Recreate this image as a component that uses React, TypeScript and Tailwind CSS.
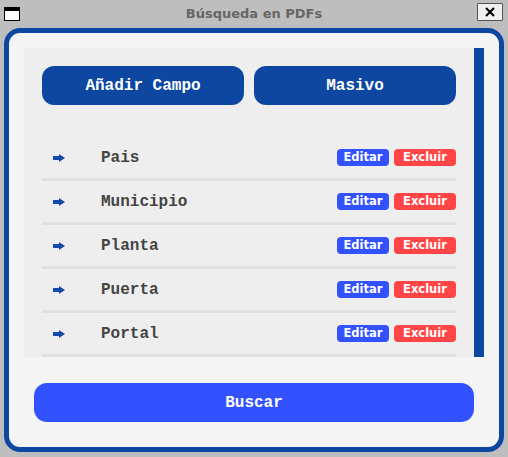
const fields = ["Pais", "Municipio", "Planta", "Puerta", "Portal"];

const Arrow = () => (
  <svg width="12" height="8" viewBox="0 0 12 8" className="shrink-0">
    <rect x="0" y="2" width="7" height="4" fill="#1548a8" />
    <polygon points="6,0 12,4 6,8" fill="#1548a8" />
  </svg>
);

const App: React.FC = () => {
  return (
    <div className="w-[508px] h-[457px] bg-[#bebebe] flex flex-col overflow-hidden">
      {/* title bar */}
      <div className="h-[28px] shrink-0 grid grid-cols-[1fr_auto_1fr] items-center">
        <div className="pl-[4px]">
          <div className="w-[16px] h-[14px] border border-black border-t-[4px] bg-white" />
        </div>
        <div className="font-['DejaVu_Sans',sans-serif] font-bold text-[13px] text-[#666666] -mt-[1px]">
          Búsqueda en PDFs
        </div>
        <div className="flex justify-end pr-[5px]">
          <div className="w-[26px] h-[18px] -mt-[5px] border border-[#555] bg-[#efefef] rounded-[1px] flex items-center justify-center">
            <svg width="10" height="10" viewBox="0 0 10 10">
              <path d="M1 1 L9 9 M9 1 L1 9" stroke="#000" strokeWidth="2" />
            </svg>
          </div>
        </div>
      </div>

      {/* frame */}
      <div className="mx-[4px] mb-[5px] flex-1 border-[5px] border-[#0d47a1] rounded-[16px] bg-[#f4f4f4] p-[15px] flex flex-col">
        <div className="h-[309px] shrink-0 flex bg-[#eeeeee] overflow-hidden">
          <div className="flex-1 px-[18px] pt-[18px] font-['Liberation_Mono',monospace] font-bold">
            <div className="grid grid-cols-2 gap-[10px]">
              <button className="h-[39px] rounded-[12px] bg-[#0d47a1] text-white text-[16px]">
                Añadir Campo
              </button>
              <button className="h-[39px] rounded-[12px] bg-[#0d47a1] text-white text-[16px]">
                Masivo
              </button>
            </div>
            <div className="mt-[32px]">
              {fields.map((f) => (
                <div
                  key={f}
                  className="h-[44px] flex items-center border-b-[3px] border-[#e0e0e0]"
                >
                  <div className="w-[59px] pl-[11px] flex items-center">
                    <Arrow />
                  </div>
                  <span className="flex-1 text-[16px] text-[#444444]">{f}</span>
                  <div className="flex gap-[5px] font-['DejaVu_Sans',sans-serif] font-bold text-[11.5px] text-white">
                    <span className="w-[52px] h-[17px] rounded-[4px] bg-[#3352ff] flex items-center justify-center">
                      Editar
                    </span>
                    <span className="w-[62px] h-[17px] rounded-[4px] bg-[#ff4545] flex items-center justify-center">
                      Excluir
                    </span>
                  </div>
                </div>
              ))}
            </div>
          </div>
          <div className="w-[10px] bg-[#0d47a1]" />
        </div>
        <button className="mt-[26px] mx-[10px] h-[39px] rounded-[13px] bg-[#3352ff] text-white font-['Liberation_Mono',monospace] font-bold text-[16px]">
          Buscar
        </button>
      </div>
    </div>
  );
};

export default App;
